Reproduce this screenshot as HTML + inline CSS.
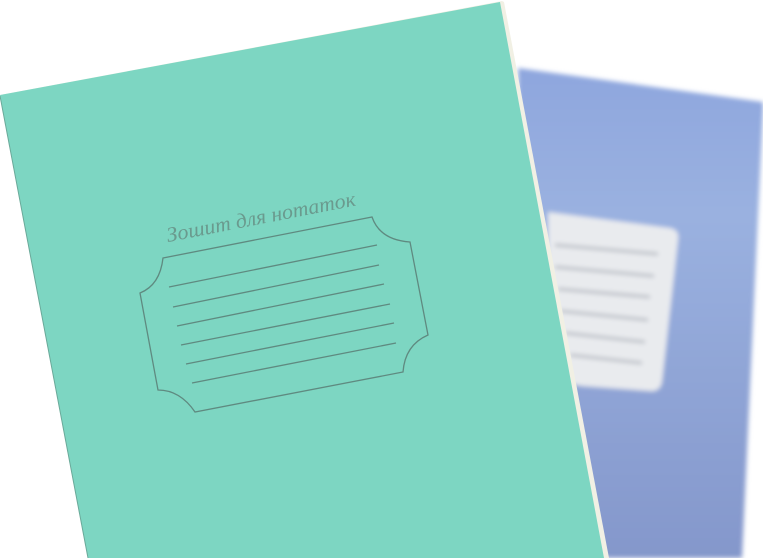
<!DOCTYPE html>
<html><head><meta charset="utf-8"><style>
html,body{margin:0;padding:0;background:#fff;width:763px;height:558px;overflow:hidden}
</style></head><body>
<svg width="763" height="558" viewBox="0 0 763 558" xmlns="http://www.w3.org/2000/svg">
<defs>
<filter id="b" x="-10%" y="-10%" width="120%" height="120%"><feGaussianBlur stdDeviation="2.5"/></filter>
<linearGradient id="bg" x1="0" y1="0" x2="0" y2="1"><stop offset="0" stop-color="#8ea6de"/><stop offset="0.3" stop-color="#9ab1e0"/><stop offset="1" stop-color="#8497cb"/></linearGradient>
</defs>
<g filter="url(#b)">
<polygon points="518,68 763,102 763,110 742,558 540,558 520,200" fill="url(#bg)"/>
<path d="M548,212 L670,228 Q680,230 678,240 L662,382 Q660,392 650,391 L582,386 L548,380 Z" fill="#e9ebee"/>
<g stroke="#b9bdc5" stroke-width="3">
<line x1="555" y1="245" x2="658" y2="254"/>
<line x1="555" y1="267" x2="654" y2="276"/>
<line x1="558" y1="289" x2="650" y2="297"/>
<line x1="560" y1="311" x2="648" y2="320"/>
<line x1="565" y1="333" x2="645" y2="342"/>
<line x1="570" y1="355" x2="642" y2="363"/>
</g>
</g>
<polygon points="0,95 502,1 504,2 609,558 88,558" fill="#f1f0e4"/>
<polygon points="0,95 500,2 604,558 88,558" fill="#7dd6c2"/>
<line x1="0" y1="96" x2="88" y2="558" stroke="#6aa999" stroke-width="1"/>
<g fill="none" stroke="#5f8a80" stroke-width="1.3">
<path d="M163,258 L372,217 Q380,240 410,242 L428,335 Q405,345 403,372 L195,412 Q180,390 158,390 L140,293 Q160,285 163,258 Z"/>
<line x1="169" y1="287" x2="377" y2="245"/>
<line x1="173" y1="307" x2="379" y2="265"/>
<line x1="177" y1="326" x2="384" y2="284"/>
<line x1="181" y1="345" x2="390" y2="304"/>
<line x1="186" y1="364" x2="394" y2="323"/>
<line x1="192" y1="383" x2="396" y2="343"/>
</g>
<text x="168" y="242" transform="rotate(-11 168 242)" font-family="Liberation Serif, serif" font-style="italic" font-size="21" fill="#6a9a8e" textLength="192" lengthAdjust="spacingAndGlyphs">Зошит для нотаток</text>
</svg>
</body></html>
